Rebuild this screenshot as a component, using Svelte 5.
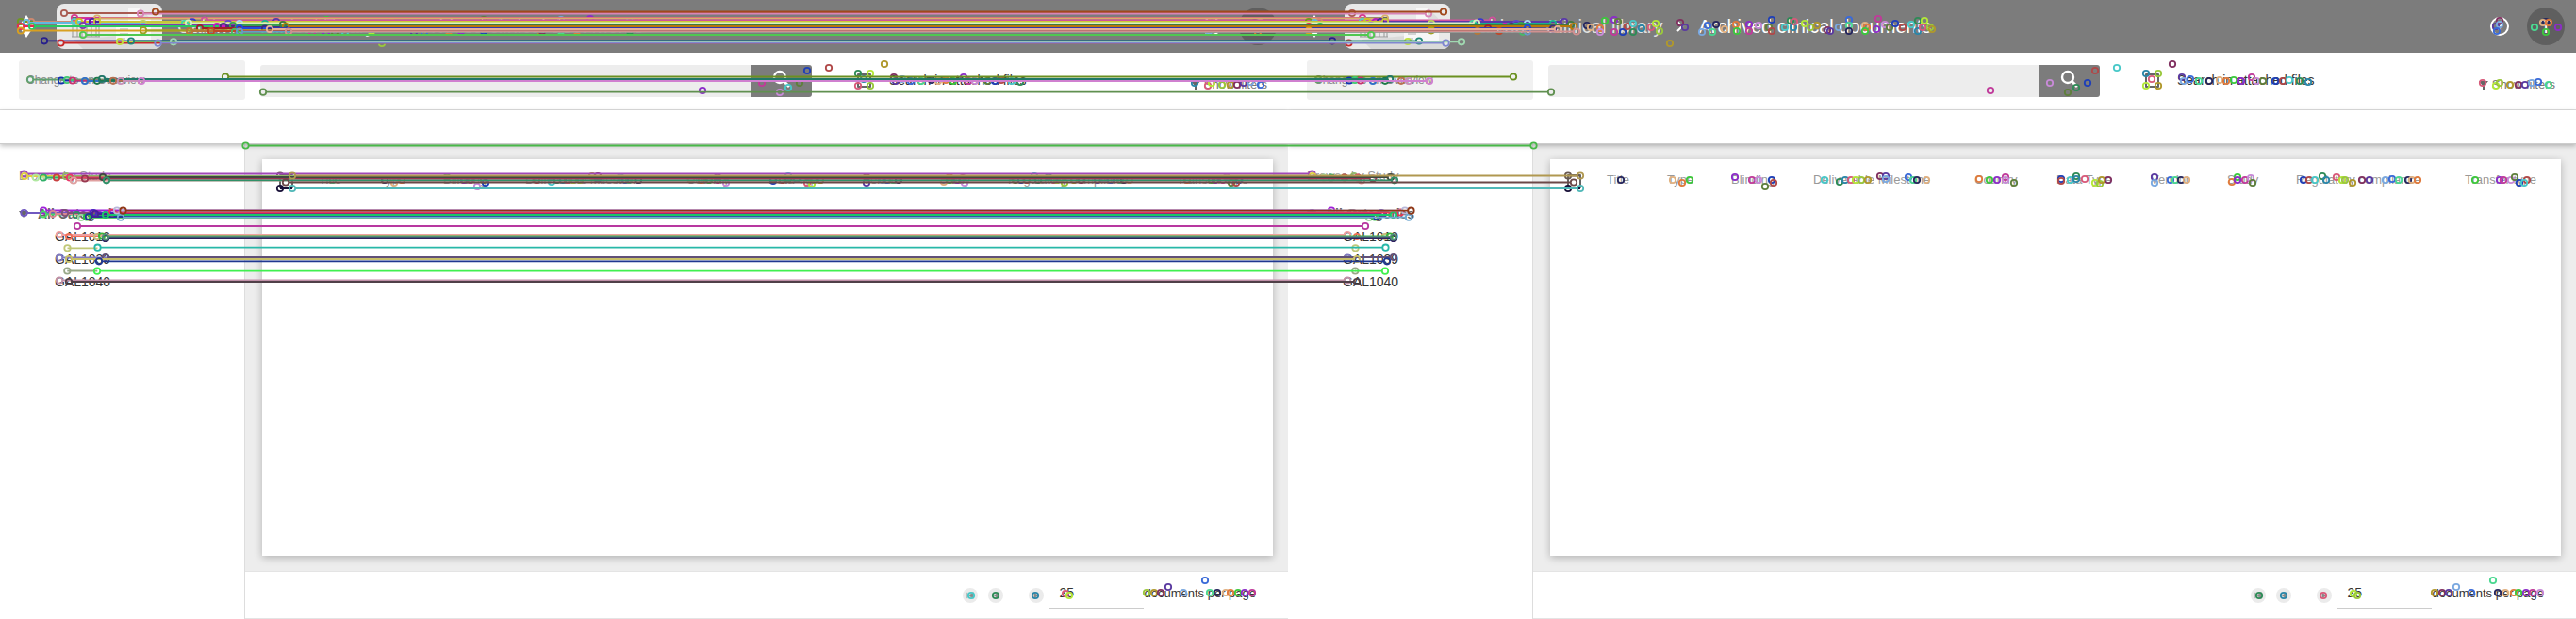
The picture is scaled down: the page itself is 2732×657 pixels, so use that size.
<script>
  const columns = [
    ['Title', 64], ['Type', 68], ['Blinding', 87], ['Deliverable Milestone', 171],
    ['Country', 87], ['Data Type', 100], ['Vendor', 81], ['Study', 73],
    ['Regulatory compliance', 179], ['Transfer type', 0]
  ];
  const programs = ['GAL1019', 'GAL1039', 'GAL1040'];
  const panes = ['left', 'right'];
  const span = 1366;

  const palette = [
    '#2e8b57', '#1f3fb8', '#c03a9a', '#e07a3c', '#4ad890', '#5a3aa0', '#9ac83c', '#2a86a8', '#b04848',
    '#c88ad8', '#3cc83c', '#26265c', '#7aa8e0', '#b0982c', '#d85a7a', '#48c8c8', '#5f7f3c', '#8c2cc8',
    '#e0b080', '#3a6ad8', '#803060', '#b4e838'
  ];
  const tint = (i, shift) => palette[(i * 7 + shift) % palette.length];

  // Keypoints found in one pane only: x, y
  const loose = [
    [317,27],[321,29],[331,30],[336,22],[346,21],[346,34],[331,34],[350,23],[355,34],[360,28],[366,25],[366,34],
    [375,30],[385,29],[390,25],[394,33],[405,46],[416,24],[421,29],[439,34],[445,27],[450,34],[454,26],
    [463,31],[475,26],[476,33],[489,26],[489,33],[499,27],[510,29],[513,21],[513,33],[527,29],[533,22],[536,29],
    [537,23],[548,25],[554,29],[561,27],[572,32],[575,33],[584,29],[595,21],[595,27],[595,33],[612,27],[614,29],
    [612,33],[624,31],[626,20],[633,26],[638,29],[644,25],[652,29],[661,26],[668,22],[668,33],[673,29],[675,22],
    [681,29],[683,31],[1285,22],[1281,28],[1285,26],[1282,33],[1322,29],[1334,23],[1331,24],[1337,24],[1334,34],[1347,29],
    [745,96],[808,88],[827,98],[848,88],[856,75],[879,72],[836,93],[910,78],[916,84],[910,91],[923,78],[923,91],[938,68],
    [948,82],[950,86],[957,84],[966,86],[977,86],[988,85],[995,86],[1003,85],[1011,86],[1022,82],[1027,86],[1034,86],
    [1047,86],[1055,86],[1062,85],[1073,86],[1082,87],
    [1267,88],[1281,91],[1285,88],[1296,90],[1305,90],[1312,90],[1319,88],[1326,87],[1337,90],
    [353,191],[408,191],[418,194],[426,191],[474,188],[492,191],[499,191],[506,198],[513,191],[515,194],
    [569,191],[585,193],[591,191],[597,191],[602,191],[608,191],[615,191],[628,187],[634,187],[634,190],[658,188],
    [663,191],[667,191],[677,191],[733,190],[744,191],[752,191],[761,188],[761,191],[770,194],
    [820,190],[820,192],[830,191],[836,187],[836,190],[845,190],[856,194],[861,195],[863,191],[870,191],
    [919,188],[919,194],[936,191],[941,191],[947,191],[953,191],[1001,193],[1007,188],[1007,191],[1015,191],[1021,189],[1023,194],
    [1077,191],[1083,191],[1089,191],[1097,187],[1101,191],[1112,188],[1118,191],[1121,191],[1129,194],[1139,191],
    [1147,191],[1164,191],[1171,190],[1178,191],[1188,191],[1192,191],[1198,191],
    [1259,191],[1285,191],[1289,191],[1297,191],[1301,188],[1306,194],[1314,191],[1311,194],
    [1030,632],[1056,632],[1098,632],[1130,630],[1134,632],
    [1216,629],[1224,629],[1231,629],[1239,623],[1255,629],[1278,616],[1283,629],[1291,629],[1300,629],[1305,629],
    [1313,629],[1320,629],[1328,629]
  ];

  // Keypoints matched across both panes: x, y, colour
  const matches = [
    [68,14,'#a85a50'],[149,14.5,'#d884b8'],[165,12.5,'#a0481c'],[79,19,'#d83a90'],[103,19.5,'#d8b068'],
    [217,21.5,'#d0509c'],[22,23,'#6f9a20'],[33,23,'#d08a70'],[204,23.3,'#3838d0'],[293,23,'#5a38a8'],
    [28,24,'#60b8e0'],[79,23,'#58c8c8'],[84,23,'#d0c020'],[93,23,'#b020c0'],[98,23,'#4a20a0'],[103,23,'#c8c838'],
    [152,25,'#b8d060'],[196,25,'#40d8a0'],[242,25,'#6048c8'],[254,25,'#a8d8f0'],[281,25,'#18b08c'],
    [88,27,'#803cb0'],[200,24.5,'#d8f0c0'],[22,28,'#e82850'],[34,28,'#28c860'],[230,28,'#d018c0'],[237,28,'#483078'],
    [247,27,'#38a050'],[300,26,'#407840'],[303,28,'#b87808'],[212,30,'#a02028'],[254,30,'#2048e0'],[281,30.5,'#3a2a80'],
    [22,32.5,'#d8a020'],[152,32.3,'#a0a020'],[201,33,'#b87838'],[224,33,'#c04828'],[249,33.8,'#48b868'],[254,33.6,'#6898c8'],
    [286,31,'#e8b098'],[306,33.5,'#d09090'],
    [88,37,'#50c850'],[47,43.3,'#28208c'],[64.5,45.5,'#c82828'],[127,44,'#c0e040'],[139,43.5,'#208878'],
    [184,44.3,'#a0d8b0'],[167.5,45.7,'#8088d0'],
    [32,84.5,'#60a070'],[239,81.5,'#6a9020'],[65,85.5,'#1030b0'],[71,85,'#40c870'],[77,85.5,'#c83070'],
    [90,86,'#3070c8'],[103,85.8,'#207848'],[108,84,'#207868'],[120,85.8,'#b87050'],[128,86,'#c890b8'],[150,86,'#d080d0'],
    [279,97.7,'#609050'],[260.5,154.5,'#48b848'],
    [25.5,184.5,'#a048b8'],[26,187,'#e0d040'],[38,188.5,'#b0e8a0'],[46,188.5,'#30b068'],[60,188.5,'#c84040'],
    [70,187,'#90b868'],[74,188.5,'#e83868'],[78,191.5,'#e0a0a0'],[90,189.5,'#983850'],[109,188,'#404840'],[113,191.3,'#309068'],
    [310,186.5,'#b09850'],[303,193.5,'#6b4848'],[310,200,'#50b8b8'],
    [25.5,226,'#7058c0'],[46,223.5,'#a020d8'],[46,227.5,'#48d868'],[56,227,'#d88890'],[69,226,'#805078'],[81,228,'#309068'],
    [99,226,'#4828c0'],[86,231,'#a0d8a0'],[92,230.5,'#28c040'],[94,230,'#203898'],[101,227,'#482098'],[119,225.5,'#e83858'],
    [112,228,'#18c868'],[124,223.5,'#b8b8d8'],[128,230.7,'#70a8d0'],[130.5,223.7,'#903818'],
    [82,240,'#b838a0'],[63,249,'#f0a0a0'],[73,251,'#f07058'],[103,251,'#c8b878'],[108,250.5,'#38b838'],
    [112,253,'#302060'],[112,251.5,'#509078'],[103.5,262.7,'#28b8a8'],
    [63,273.5,'#8078c0'],[112,273,'#605078'],[73,275,'#c8c068'],[105,277.3,'#203890'],
    [103,287.7,'#40f050'],[63,297.5,'#c090a8'],[73,299,'#504048']
  ];

  const anchors = [[297,186.5,'#685850'],[297,200,'#181038'],[71.5,263.3,'#c0c878'],[71.3,287.5,'#98a888']];
</script>

<div class="page">
  {#each panes as pane}
    <section class="pane">
      <header class="top">
        <svg class="diamond" viewBox="0 0 16 24" aria-hidden="true"><path d="M8 0l8 12-8 12L0 12z" fill="#fff" /></svg>
        <button class="tile" aria-label="Cabinet">
          <svg viewBox="0 0 112 48" aria-hidden="true">
            <path d="M18 38l70-6 20 12v4H28z" fill="#dadada" />
            <path d="M76 5h13l11 11v24H63V21h13z" fill="#f7f7f7" />
            <path d="M89 5v11h11z" fill="#dcdcdc" />
            <path d="M67 27h9M67 32h9M67 37h6" stroke="#c8c8c8" stroke-width="1.5" />
            <path d="M16 15h30" stroke="#666" stroke-width="2" />
            <path d="M17 18v17M22 18v17M27 18v17M32 18v17M37 18v17M42 18v17M45 18v17" stroke="#aaa" stroke-width="1.3" />
            <path d="M16 35h30" stroke="#999" />
          </svg>
        </button>
        <nav class="crumbs">
          <a href="#cabinet">Cabinet</a>
          <a class="second" href="#library">Clinical library</a>
          <svg viewBox="0 0 8 12" aria-hidden="true"><path d="M1 1l5 5-5 5" fill="none" stroke="#fff" stroke-width="2" /></svg>
          <span>Archived clinical documents</span>
        </nav>
        <button class="help" aria-label="Help">?</button>
        <button class="avatar">T</button>
      </header>

      <div class="tools">
        <button class="switch">Change to an Overview</button>
        <form class="search">
          <input type="search" aria-label="Search documents" />
          <button type="button" aria-label="Search">
            <svg viewBox="0 0 20 20" aria-hidden="true">
              <circle cx="8" cy="8" r="6" fill="none" stroke="#fff" stroke-width="2.4" />
              <path d="M12 12l6 6" stroke="#fff" stroke-width="3" />
            </svg>
          </button>
        </form>
        <label class="attached"><input type="checkbox" />Search in attached files</label>
        <button class="filters">
          <svg viewBox="0 0 10 10" aria-hidden="true"><path d="M0 1h10L6 6v4H4V6z" fill="#666" /></svg>
          Show filters
        </button>
      </div>
      <div class="strip"></div>

      <div class="body">
        <aside>
          <h2>Browse by Study</h2>
          <button class="root">
            <svg viewBox="0 0 10 8" aria-hidden="true"><path d="M0 1h10L5 8z" fill="#666" /></svg>
            All Categories
          </button>
          <ul>
            {#each programs as name}
              <li><a href="#{name}">{name}</a></li>
            {/each}
          </ul>
        </aside>
        <main>
          <div class="canvas">
            <div class="card">
              <table>
                <thead>
                  <tr>
                    <th class="pick"><input type="checkbox" aria-label="Select all" /></th>
                    {#each columns as [label, width]}
                      <th style:width={width ? `${width}px` : 'auto'}>{label}</th>
                    {/each}
                  </tr>
                </thead>
              </table>
            </div>
          </div>
          <footer>
            <button class="step first" aria-label="First page"><svg viewBox="0 0 10 10"><path d="M1 1v8M9 1L3 5l6 4z" fill="#888" stroke="#999" /></svg></button>
            <button class="step prev" aria-label="Previous page"><svg viewBox="0 0 10 10"><path d="M8 1L2 5l6 4z" fill="#888" /></svg></button>
            <button class="step" aria-label="Next page"><svg viewBox="0 0 10 10"><path d="M2 1l6 4-6 4z" fill="#888" /></svg></button>
            <select id="size-{pane}"><option>25</option></select>
            <label for="size-{pane}">documents per page</label>
          </footer>
        </main>
      </div>
    </section>
  {/each}

  <svg class="overlay" viewBox="0 0 2732 657" preserveAspectRatio="none" aria-hidden="true">
    {#each loose as [x, y], i}
      <circle cx={x} cy={y} r="3.2" stroke={tint(i, 4)} />
      <circle cx={x + span} cy={y} r="3.2" stroke={tint(i, 11)} />
    {/each}
    {#each anchors as [x, y, color]}
      <path d="M{x} {y}H{x < 100 ? x + 32 : x + 13}M{x + span} {y}h{x < 100 ? 1 : 13}" stroke={color} />
      <circle cx={x} cy={y} r="3.2" stroke={color} />
      <circle cx={x + span} cy={y} r="3.2" stroke={color} />
    {/each}
    {#each matches as [x, y, color]}
      <path d="M{x + 3} {y}H{x + span - 3}" stroke={color} />
      <circle cx={x} cy={y} r="3.2" stroke={color} />
      <circle cx={x + span} cy={y} r="3.2" stroke={color} />
    {/each}
  </svg>
</div>

<style>
  :global(body) { margin: 0; background: #fff; }
  .page {
    position: relative;
    display: grid;
    grid-template-columns: 1fr 1fr;
    min-height: 100vh;
    font: 13px/16px "Liberation Sans", Arial, sans-serif;
    color: #333;
  }
  button, input, select { font: inherit; color: inherit; border: 0; padding: 0; margin: 0; background: none; }
  a { color: inherit; text-decoration: none; }
  .pane { display: flex; flex-direction: column; min-width: 0; overflow: hidden; }
  .top { display: flex; align-items: center; height: 56px; background: #7c7c7c; color: #fff; padding: 0 12px 0 20px; }
  .diamond { width: 16px; height: 24px; margin-right: 24px; }
  .tile { width: 112px; height: 48px; border-radius: 8px; background: #e9e9e9; overflow: hidden; }
  .tile svg { display: block; width: 100%; }
  .crumbs { display: flex; align-items: center; flex: 1; margin-left: 16px; font-size: 20px; line-height: 24px; white-space: nowrap; }
  .crumbs a { color: #e0e0e0; }
  .crumbs .second { margin-left: 16px; }
  .crumbs svg { width: 8px; height: 12px; margin: 0 15px; }
  .help { box-sizing: border-box; width: 20px; height: 20px; border: 2px solid #fff; border-radius: 50%; font-weight: bold; line-height: 16px; }
  .avatar { width: 40px; height: 40px; margin-left: 19px; border-radius: 50%; background: #5f5f5f; font-size: 20px; }
  .tools { display: flex; align-items: center; height: 60px; padding: 0 22px 0 20px; border-bottom: 1px solid #ddd; }
  .switch { width: 240px; height: 42px; padding-left: 8px; border-radius: 3px; background: #f1f1f1; color: #888; font-size: 12px; text-align: left; }
  .tools .switch { margin-bottom: 2px; }
  .search { display: flex; width: 585px; height: 34px; margin-left: 16px; border-radius: 3px; overflow: hidden; }
  .search input { flex: 1; min-width: 0; background: #ededed; }
  .search button { width: 65px; background: #7c7c7c; }
  .search svg { width: 20px; height: 20px; }
  .attached { display: flex; align-items: center; gap: 19px; margin-left: 48px; padding-bottom: 2px; font-size: 14px; }
  input[type="checkbox"] { appearance: none; box-sizing: border-box; width: 15px; height: 15px; border: 2px solid #666; border-radius: 1px; }
  .filters { display: flex; align-items: center; gap: 4px; margin-left: auto; padding-top: 8px; color: #777; }
  .filters svg { width: 10px; height: 10px; }
  .strip { position: relative; height: 35px; border-bottom: 1px solid #ccc; box-shadow: 0 2px 5px rgba(0, 0, 0, 0.25); }
  .body { display: flex; flex: 1; }
  aside { box-sizing: border-box; width: 260px; padding: 26px 20px; border-right: 1px solid #ddd; }
  h2 { margin: 0; font-size: 13px; line-height: 16px; font-weight: normal; color: #999; }
  .root { display: flex; align-items: center; gap: 10px; margin-top: 24px; font-size: 14px; font-weight: bold; color: #666; }
  .root svg { width: 10px; height: 8px; }
  ul { margin: 4px 0 0; padding: 0 0 0 38px; list-style: none; font-size: 14px; line-height: 24px; }
  main { display: flex; flex: 1; flex-direction: column; min-width: 0; }
  .canvas { display: flex; flex: 1; padding: 16px 16px 16px 18px; background: #ededed; }
  .card { flex: 1; background: #fff; box-shadow: 0 2px 8px rgba(0, 0, 0, 0.25); }
  table { width: 100%; table-layout: fixed; border-collapse: collapse; }
  th { height: 44px; padding: 0; font-weight: normal; text-align: left; color: #999; white-space: nowrap; }
  .pick { width: 60px; }
  .pick input { display: block; margin: 3px 0 0 18px; }
  footer { display: flex; align-items: center; justify-content: flex-end; height: 49px; padding-right: 34px; border-top: 1px solid #e4e4e4; border-bottom: 1px solid #e4e4e4; }
  .step { display: grid; place-items: center; width: 16px; height: 16px; border-radius: 50%; background: #ebebeb; }
  .first { margin-right: 11px; }
  .prev { margin-right: 27px; }
  .step svg { width: 8px; height: 8px; }
  select { appearance: none; width: 100px; height: 28px; margin-left: 6px; padding: 0 0 4px 10px; border-bottom: 1px solid #ccc; font-size: 14px; }
  footer label { padding-bottom: 4px; }
  .overlay { position: absolute; inset: 0; width: 100%; height: 100%; fill: none; stroke-width: 1.8; pointer-events: none; }
</style>
